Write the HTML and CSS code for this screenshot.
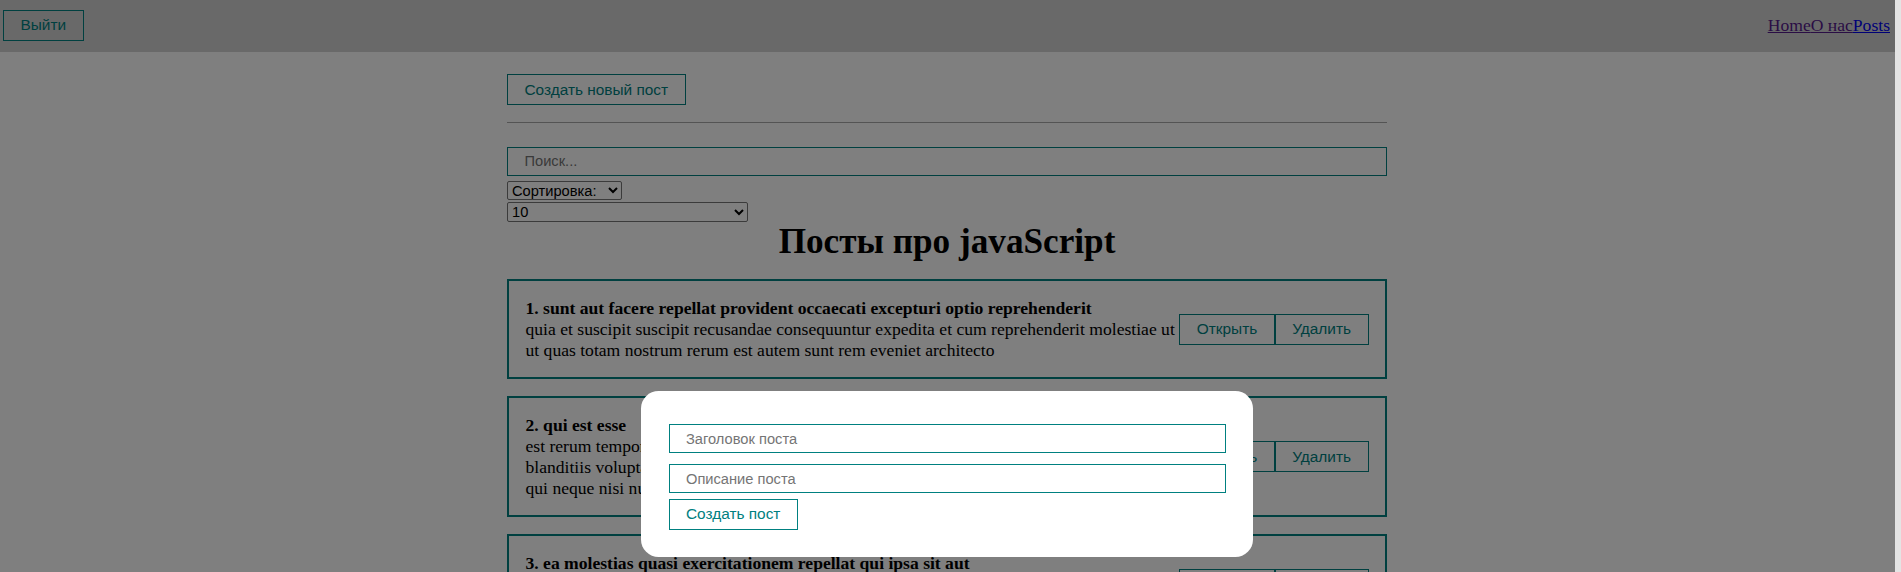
FILE: index.html
```html
<!DOCTYPE html>
<html lang="ru">
<head>
<meta charset="utf-8">
<title>Посты</title>
<link rel="stylesheet" href="styles.css">
</head>
<body>
<div class="navbar">
  <button class="my-btn">Выйти</button>
  <div class="navbar__links"><a href="#home" class="visited">Home</a><a href="#about" class="visited">О нас</a><a href="#posts" class="fresh">Posts</a></div>
</div>
<div class="app">
  <button class="my-btn create-btn">Создать новый пост</button>
  <hr class="divider">
  <div class="filter">
    <input class="my-input" placeholder="Поиск...">
    <select class="my-select sort-select">
      <option value="" disabled selected>Сортировка:</option>
      <option value="title">По названию</option>
      <option value="body">По описанию</option>
    </select>
    <select class="my-select limit-select">
      <option value="5">5</option>
      <option value="10" selected>10</option>
      <option value="25">25</option>
      <option value="-1">Показать все</option>
    </select>
  </div>
  <h1 class="list-title">Посты про javaScript</h1>
  <div class="post-list">
    <div class="post">
      <div class="post__content">
        <strong>1. sunt aut facere repellat provident occaecati excepturi optio reprehenderit</strong>
        <div>quia et suscipit suscipit recusandae consequuntur expedita et cum reprehenderit molestiae ut ut quas totam nostrum rerum est autem sunt rem eveniet architecto</div>
      </div>
      <div class="post__btns"><button class="my-btn">Открыть</button><button class="my-btn">Удалить</button></div>
    </div>
    <div class="post">
      <div class="post__content">
        <strong>2. qui est esse</strong>
        <div>est rerum tempore vitae sequi sint nihil reprehenderit dolor beatae ea dolores neque fugiat blanditiis voluptate porro vel nihil molestiae ut reiciendis qui aperiam non debitis possimus qui neque nisi nulla</div>
      </div>
      <div class="post__btns"><button class="my-btn">Открыть</button><button class="my-btn">Удалить</button></div>
    </div>
    <div class="post">
      <div class="post__content">
        <strong>3. ea molestias quasi exercitationem repellat qui ipsa sit aut</strong>
        <div>et iusto sed quo iure voluptatem occaecati omnis eligendi aut ad voluptatem doloribus vel accusantium quis pariatur molestiae porro eius odio et labore et velit aut</div>
      </div>
      <div class="post__btns"><button class="my-btn">Открыть</button><button class="my-btn">Удалить</button></div>
    </div>
    <div class="post">
      <div class="post__content">
        <strong>4. eum et est occaecati</strong>
        <div>ullam et saepe reiciendis voluptatem adipisci sit amet autem assumenda provident rerum culpa quis hic commodi nesciunt rem tenetur doloremque ipsam iure quis sunt voluptatem rerum illo velit</div>
      </div>
      <div class="post__btns"><button class="my-btn">Открыть</button><button class="my-btn">Удалить</button></div>
    </div>
    <div class="post">
      <div class="post__content">
        <strong>5. nesciunt quas odio</strong>
        <div>repudiandae veniam quaerat sunt sed alias aut fugiat sit autem sed est voluptatem omnis possimus esse voluptatibus quis est aut tenetur dolor neque</div>
      </div>
      <div class="post__btns"><button class="my-btn">Открыть</button><button class="my-btn">Удалить</button></div>
    </div>
  </div>
</div>
<div class="modal">
  <div class="modal__content">
    <form class="post-form">
      <input class="my-input" placeholder="Заголовок поста">
      <input class="my-input" placeholder="Описание поста">
      <button type="button" class="my-btn">Создать пост</button>
    </form>
  </div>
</div>
</body>
</html>
```
FILE: styles.css
```css
* {
  margin: 0;
  padding: 0;
  box-sizing: border-box;
}

html {
  overflow: hidden;
  background: #e4e4e4;
}

body {
  margin-right: 6px;
  min-height: 100vh;
  font-family: "Liberation Serif", "Times New Roman", serif;
  font-size: 17.6px;
  color: #000;
  background: #fff;
}

.navbar {
  height: 52px;
  display: flex;
  align-items: center;
  padding: 0 5px 2px 3px;
  background: lightgray;
}

.navbar__links {
  margin-left: auto;
}

.navbar__links a {
  color: #551a8b;
  text-decoration: underline;
}

.navbar__links a.fresh {
  color: #0000ee;
}

.my-btn {
  padding: 5.5px 16.5px;
  color: teal;
  font-family: "Liberation Sans", Arial, sans-serif;
  font-size: 15.4px;
  line-height: normal;
  background: transparent;
  border: 1px solid teal;
  cursor: pointer;
}

.app {
  width: 880px;
  margin: 0 auto;
  padding-right: 1px;
  box-sizing: content-box;
}

.create-btn {
  margin-top: 22px;
}

.divider {
  border: 0;
  border-top: 1px solid #a8a8a8;
  margin: 17px 0 18px;
}

.filter {
  display: flex;
  flex-direction: column;
  align-items: flex-start;
}

.my-input {
  width: 100%;
  height: 29px;
  padding: 5.5px 16.5px;
  margin: 5.5px 0;
  font-family: "Liberation Sans", Arial, sans-serif;
  font-size: 14.67px;
  border: 1px solid teal;
  background: #fff;
  color: #000;
  outline: none;
}

.my-input::placeholder {
  color: #757575;
}

.my-select {
  font-family: "Liberation Sans", Arial, sans-serif;
  font-size: 14.67px;
  color: #000;
  background: #fff;
  border: 1px solid #767676;
  border-radius: 2px;
}

.sort-select {
  width: 115px;
  height: 19px;
}

.limit-select {
  width: 241px;
  height: 20px;
  margin-top: 2px;
}

.list-title {
  font-size: 35.2px;
  font-weight: bold;
  text-align: center;
}

.post {
  display: flex;
  justify-content: space-between;
  align-items: center;
  padding: 16.5px;
  border: 2px solid teal;
  margin-top: 17px;
}

.post__btns {
  display: flex;
  flex-shrink: 0;
}

.modal {
  position: fixed;
  top: 0;
  left: 0;
  right: 6px;
  height: 948px;
  display: flex;
  justify-content: center;
  align-items: center;
  background: rgba(0, 0, 0, 0.5);
}

.modal__content {
  width: 612px;
  padding: 27.5px;
  margin-right: 1px;
  background: #fff;
  border-radius: 17.6px;
}

.post-form {
  display: flex;
  flex-direction: column;
  align-items: flex-start;
}
```
